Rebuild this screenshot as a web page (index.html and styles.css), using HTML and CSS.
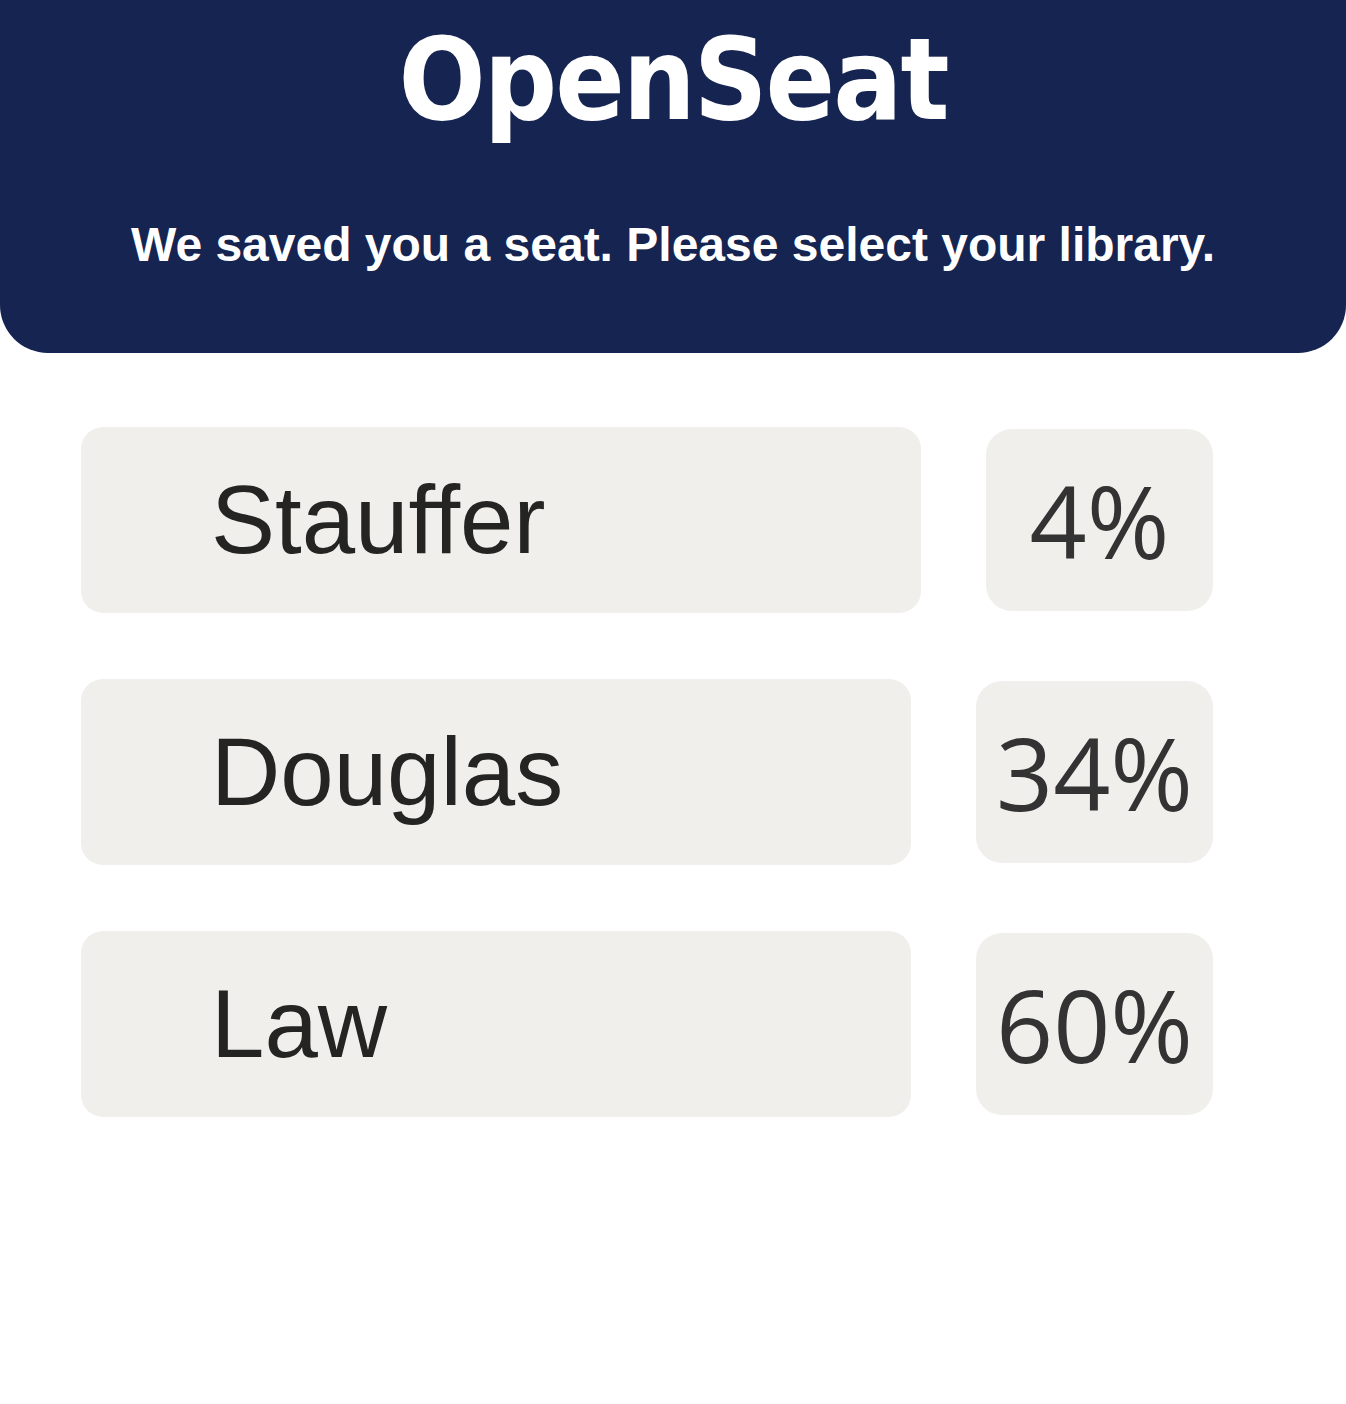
FILE: index.html
```html
<!DOCTYPE html>
<html lang="en">
<head>
<meta charset="utf-8">
<title>OpenSeat</title>
<link rel="stylesheet" href="styles.css">
</head>
<body>
<header class="hero">
  <h1 class="brand">OpenSeat</h1>
  <p class="tagline">We saved you a seat. Please select your library.</p>
</header>
<main class="list">
  <div class="row">
    <div class="name-box">Stauffer</div>
    <div class="pct-box">4%</div>
  </div>
  <div class="row">
    <div class="name-box">Douglas</div>
    <div class="pct-box">34%</div>
  </div>
  <div class="row">
    <div class="name-box">Law</div>
    <div class="pct-box">60%</div>
  </div>
</main>
</body>
</html>
```
FILE: styles.css
```css
html, body {
  margin: 0;
  padding: 0;
  background: #ffffff;
}
body {
  font-family: "Liberation Sans", Arial, sans-serif;
}
.hero {
  background: #152451;
  border-radius: 0 0 48px 48px;
  padding: 23px 0 84px;
  text-align: center;
  color: #ffffff;
}
.brand {
  margin: 0;
  font-family: "DejaVu Sans Condensed", "DejaVu Sans", sans-serif;
  font-weight: bold;
  font-size: 114px;
  line-height: 1;
  letter-spacing: -2px;
}
.tagline {
  margin: 84px 0 0;
  font-family: "Liberation Sans", Arial, sans-serif;
  font-weight: bold;
  font-size: 48px;
  line-height: 1;
}
.list {
  display: flex;
  flex-direction: column;
  gap: 66px;
  padding: 74px 133px 0 81px;
}
.row {
  display: flex;
  align-items: center;
  gap: 65px;
}
.name-box {
  flex: 1;
  height: 186px;
  box-sizing: border-box;
  background: #f0efeb;
  border-radius: 22px;
  display: flex;
  align-items: center;
  padding-left: 130px;
  font-family: "Liberation Sans", Arial, sans-serif;
  font-size: 96px;
  line-height: 1;
  color: #242422;
}
.pct-box {
  min-width: 227px;
  height: 182px;
  box-sizing: border-box;
  padding: 0 20px;
  background: #f0efeb;
  border-radius: 26px;
  display: flex;
  align-items: center;
  justify-content: center;
  font-family: "Open Sans", sans-serif;
  font-size: 100px;
  line-height: 1;
  color: #333333;
}
```
